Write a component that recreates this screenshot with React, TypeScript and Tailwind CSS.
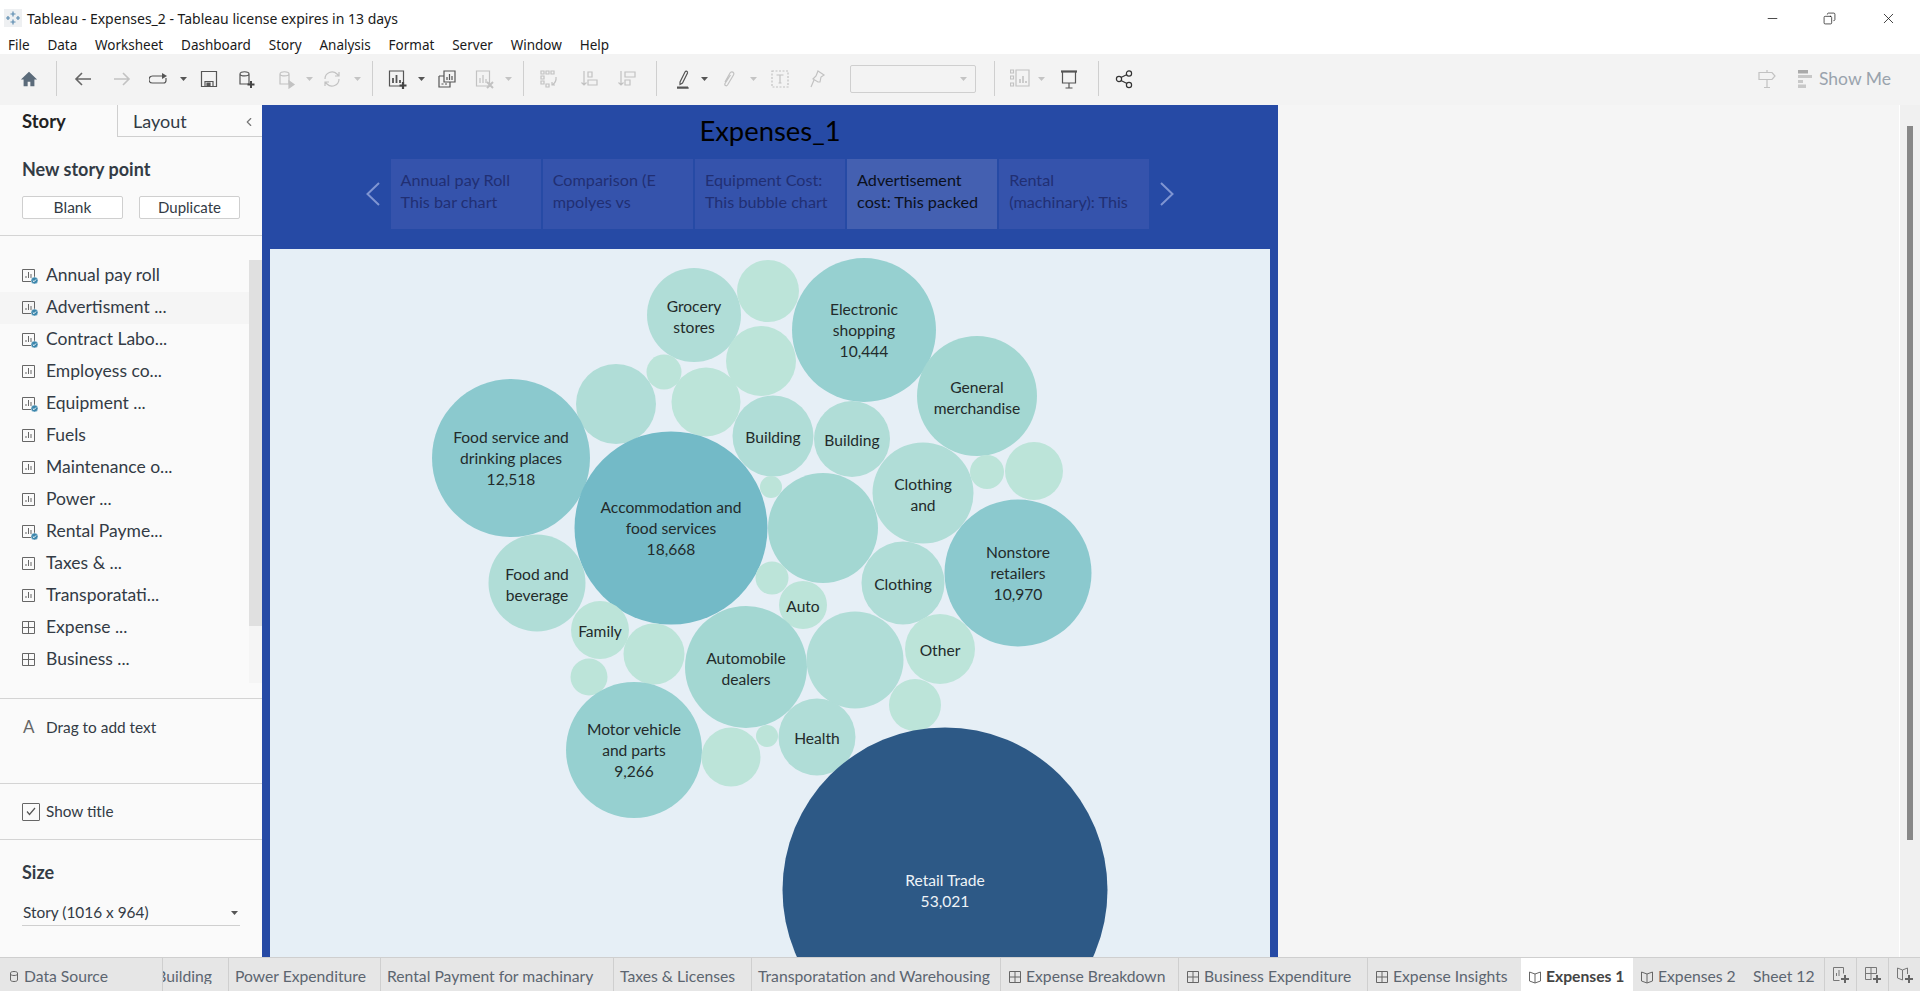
import React from 'react';
import { ChevronLeft, Copy, Minus, X } from 'lucide-react';

const UI_FONT = 'font-["Noto_Sans",sans-serif]';
const BOOK_FONT = 'font-["Lato",sans-serif]';

const menus = ['File', 'Data', 'Worksheet', 'Dashboard', 'Story', 'Analysis', 'Format', 'Server', 'Window', 'Help'];

type Bubble = { x: number; y: number; r: number; fill: string; lines?: string[]; value?: string; light?: boolean };

// x/y relative to the story canvas
const bubbles: Bubble[] = [
  { x: 424, y: 66, r: 47, fill: '#b0ddd7', lines: ['Grocery', 'stores'] },
  { x: 498, y: 42, r: 31, fill: '#bce4d9' },
  { x: 594, y: 81, r: 72, fill: '#96d0d0', lines: ['Electronic', 'shopping'], value: '10,444' },
  { x: 491, y: 112, r: 35, fill: '#bce4d9' },
  { x: 394, y: 123, r: 17.5, fill: '#bce4d9' },
  { x: 346, y: 155, r: 40, fill: '#b0ddd7' },
  { x: 436, y: 153, r: 34.5, fill: '#bce4d9' },
  { x: 707, y: 147, r: 60, fill: '#a3d7d2', lines: ['General', 'merchandise'] },
  { x: 503, y: 187, r: 40.5, fill: '#b0ddd7', lines: ['Building'] },
  { x: 582, y: 190, r: 38, fill: '#b0ddd7', lines: ['Building'] },
  { x: 241, y: 209, r: 79, fill: '#8bc9ce', lines: ['Food service and', 'drinking places'], value: '12,518' },
  { x: 401, y: 279, r: 96.5, fill: '#73bac7', lines: ['Accommodation and', 'food services'], value: '18,668' },
  { x: 501, y: 238, r: 11, fill: '#bce4d9' },
  { x: 653, y: 244, r: 50.5, fill: '#b0ddd7', lines: ['Clothing', 'and'] },
  { x: 717, y: 223, r: 17, fill: '#bce4d9' },
  { x: 764, y: 222, r: 29, fill: '#bce4d9' },
  { x: 553, y: 279, r: 55, fill: '#a3d7d2' },
  { x: 748, y: 324, r: 73.5, fill: '#8bc9ce', lines: ['Nonstore', 'retailers'], value: '10,970' },
  { x: 633, y: 334, r: 41.5, fill: '#b0ddd7', lines: ['Clothing'] },
  { x: 502, y: 329, r: 16.5, fill: '#bce4d9' },
  { x: 533, y: 356, r: 24, fill: '#bce4d9', lines: ['Auto'] },
  { x: 267, y: 334, r: 48.5, fill: '#b0ddd7', lines: ['Food and', 'beverage'] },
  { x: 330, y: 381, r: 29, fill: '#bce4d9', lines: ['Family'] },
  { x: 384, y: 405, r: 30.5, fill: '#bce4d9' },
  { x: 319, y: 428, r: 18.5, fill: '#bce4d9' },
  { x: 476, y: 418, r: 61, fill: '#a3d7d2', lines: ['Automobile', 'dealers'] },
  { x: 585, y: 411, r: 48.5, fill: '#b0ddd7' },
  { x: 670, y: 400, r: 35, fill: '#bce4d9', lines: ['Other'] },
  { x: 645, y: 456, r: 26, fill: '#bce4d9' },
  { x: 364, y: 501, r: 68, fill: '#96d0d0', lines: ['Motor vehicle', 'and parts'], value: '9,266' },
  { x: 461, y: 508, r: 29.5, fill: '#bce4d9' },
  { x: 497, y: 487, r: 11, fill: '#bce4d9' },
  { x: 547, y: 488, r: 38.5, fill: '#b0ddd7', lines: ['Health'] },
  { x: 675, y: 641, r: 162.5, fill: '#2d5986', lines: ['Retail Trade'], value: '53,021', light: true },
];

const storyPoints = [
  ['Annual pay Roll', 'This bar chart'],
  ['Comparison (E', 'mpolyes vs'],
  ['Equipment Cost:', 'This bubble chart'],
  ['Advertisement', 'cost: This packed'],
  ['Rental', '(machinary): This'],
];

const sheets: { name: string; done?: boolean; kind?: 'chart' | 'table'; active?: boolean }[] = [
  { name: 'Annual pay roll', done: true },
  { name: 'Advertisment ...', done: true, active: true },
  { name: 'Contract Labo...', done: true },
  { name: 'Employess co...' },
  { name: 'Equipment ...', done: true },
  { name: 'Fuels' },
  { name: 'Maintenance o...' },
  { name: 'Power ...' },
  { name: 'Rental Payme...', done: true },
  { name: 'Taxes & ...' },
  { name: 'Transporatati...' },
  { name: 'Expense ...', kind: 'table' },
  { name: 'Business ...', kind: 'table' },
];

function Caret({ className = '', dim }: { className?: string; dim?: boolean }) {
  return (
    <svg width="7" height="4" viewBox="0 0 7 4" className={`shrink-0 ${className}`}>
      <path d="M0 0h7L3.5 4z" fill={dim ? '#c4c4c4' : '#555'} />
    </svg>
  );
}

function Sep({ className = '' }: { className?: string }) {
  return <div className={`h-[35px] w-px shrink-0 bg-[#cfcfcf] ${className}`} />;
}

function Glyph({ children, className = '', stroke = '#555' }: { children: React.ReactNode; className?: string; stroke?: string }) {
  return (
    <svg width="20" height="20" viewBox="0 0 20 20" fill="none" stroke={stroke} strokeWidth="1.2" className={`shrink-0 ${className}`}>
      {children}
    </svg>
  );
}

function Toolbar() {
  const dim = '#c2c2c2';
  return (
    <div className="flex h-[51px] items-center bg-[#f3f3f3] pb-[2px]">
      <svg width="18" height="18" viewBox="0 0 20 20" className="ml-[20px] shrink-0">
        <path d="M10 2 1 10.500h3V18h4.500v-5h3v5H16v-7.500h3z" fill="#5b6b7a" />
      </svg>
      <Sep className="ml-[18px]" />
      <Glyph className="ml-[16px]" stroke="#666"><path d="M18 10H3M9 4l-6 6 6 6" strokeWidth="1.6" /></Glyph>
      <Glyph className="ml-[19px]" stroke={dim}><path d="M2 10h15M11 4l6 6-6 6" strokeWidth="1.6" /></Glyph>
      <Glyph className="ml-[17px]"><path d="M14 7H3.5a2.5 2.5 0 0 0 0 7h11a2.500 2.500 0 0 0 2.500-2.500V9" /><path d="M13 4l5 3-5 3z" fill="#555" stroke="none" /></Glyph>
      <Caret className="ml-[10.5px]" />
      <Glyph className="ml-[12.5px]"><path d="M2.5 2.5h15v15h-15zM6 17.5v-5h8v5" /><path d="M8 14h3v3H8z" fill="#555" /></Glyph>
      <Glyph className="ml-[17px]"><path d="M4 5c0-3 9-3 9 0v10H4zM4 5c0 2.500 9 2.500 9 0" /><path d="M15 12v7M11.500 15.500h7" strokeWidth="2" stroke="#444" /></Glyph>
      <Glyph className="ml-[20px]" stroke={dim}><path d="M4 5c0-3 9-3 9 0v10H4zM4 5c0 2.500 9 2.500 9 0" /><path d="M13 12l5 3.500-5 3.500z" fill={dim} /></Glyph>
      <Caret className="ml-[9.5px]" dim />
      <Glyph className="ml-[9.5px]" stroke={dim}><path d="M3 10a7 7 0 0 1 12-5l2 2M17 10a7 7 0 0 1-12 5l-2-2M17 3v4h-4M3 17v-4h4" /></Glyph>
      <Caret className="ml-[11.5px]" dim />
      <Sep className="ml-[11.5px]" />
      <Glyph className="ml-[14px]"><path d="M2.5 2h14v15h-14z" /><path d="M6 14V9M9.5 14V6M13 14v-3" strokeWidth="1.8" /><path d="M16 13v7M12.5 16.500h7" strokeWidth="2.2" stroke="#444" /></Glyph>
      <Caret className="ml-[10.5px]" />
      <Glyph className="ml-[12px]"><path d="M7 2h11v11H7zM2 7h5M2 7v11h11v-5" /><path d="M10 11V8M12.5 11V5M15 11V7M4.5 15h2M8 15h2" /></Glyph>
      <Glyph className="ml-[17.5px]" stroke={dim}><path d="M2.5 2h13v15h-13zM6 14V9M9 14V6M12 14v-4" /><path d="M13 13l6 6M19 13l-6 6" strokeWidth="2" /></Glyph>
      <Caret className="ml-[11px]" dim />
      <Sep className="ml-[11px]" />
      <Glyph className="ml-[15px]" stroke={dim}><path d="M2 2h3v3H2zM7 2h3v3H7zM12 2h3v3h-3zM2 7h3v3H2zM2 12h3v3H2zM7 15h3v3H7zM17 8a8 8 0 0 1-4 8M13 13v3h3" /></Glyph>
      <Glyph className="ml-[21px]" stroke={dim}><path d="M4 2v14M1.5 13.500 4 16l2.500-2.500M8 3h4v5H8zM8 11h9v5H8z" /></Glyph>
      <Glyph className="ml-[16.5px]" stroke={dim}><path d="M4 2v14M1.5 13.500 4 16l2.500-2.500M8 3h10v5H8zM8 11h5v5H8z" /></Glyph>
      <Sep className="ml-[19.5px]" />
      <Glyph className="ml-[16px]"><path d="M7 13 12 3c1-1.500 3-.5 2.500 1L9.500 14l-2.500 1.500zM4 19h12" /><path d="M4 18.500h11" strokeWidth="2" /></Glyph>
      <Caret className="ml-[7.5px]" />
      <Glyph className="ml-[11.5px]" stroke={dim}><path d="M6 13 11 4c1.500-2.500 5-.5 3.500 2l-6 10c-1 1.500-3.500.5-2.500-1.500L11.500 6" /></Glyph>
      <Caret className="ml-[11px]" dim />
      <Glyph className="ml-[13px]" stroke={dim}><path d="M2 2h16v16H2z" strokeDasharray="2 1.5" /><path d="M6.500 6h7M10 6v8M8.500 14h3" /></Glyph>
      <Glyph className="ml-[17px]" stroke={dim}><path d="M11 2l6 4-3 2-1 5-2 0-5-3 3-3zM7 11l-3 7" /></Glyph>
      <div className="ml-[22.5px] flex h-[28px] w-[126px] shrink-0 items-center justify-end rounded-[2px] border border-[#cfcfcf] pr-[8px]">
        <Caret dim />
      </div>
      <Sep className="ml-[18px]" />
      <Glyph className="ml-[15px]" stroke={dim}><path d="M.5 1h3v3h-3zM.5 7h3v3h-3zM.5 14h3v3h-3zM6 1h13v16H6z" /><path d="M10 14v-4M13 14V7M16 14v-2" strokeWidth="1.6" /></Glyph>
      <Caret className="ml-[8px]" dim />
      <Glyph className="ml-[14px]"><path d="M2 2.500h16" strokeWidth="2.2" /><path d="M3.500 3v11h13V3M10 14v5M6.500 19h7" /></Glyph>
      <Sep className="ml-[19px]" />
      <Glyph className="ml-[15.5px]" stroke="#333"><circle cx="15" cy="4.500" r="2.600" /><circle cx="5" cy="10" r="2.600" /><circle cx="15" cy="16" r="2.600" /><path d="M7 8.500l6-3M7 11.500l6 3" /></Glyph>
      <Glyph className="ml-auto" stroke={dim}><path d="M10 1v2M2 3.500h13l3 3.500-3 3.500H2zM10 10.500v8M7 18.500h6" /></Glyph>
      <svg width="14" height="18" viewBox="0 0 14 18" className="ml-[21px] shrink-0">
        <path d="M0 0h10v3.500H0z" fill="#aaa" />
        <path d="M0 5h14v3H0zM0 10h5v3H0zM0 14.500h8V18H0z" fill="#c8c8c8" />
      </svg>
      <span className={`ml-[7px] mr-[29px] text-[17.5px] leading-none text-[#9aa3ad] ${BOOK_FONT}`}>Show Me</span>
    </div>
  );
}

function SheetIcon({ done, kind }: { done?: boolean; kind?: 'chart' | 'table' }) {
  return (
    <svg width="17" height="17" viewBox="0 0 17 17" fill="none" stroke="#666" className="shrink-0">
      {kind === 'table' ? (
        <path d="M.5 1.500h12v12H.5zM6.500 1.500v12M.5 7.500h12" />
      ) : (
        <>
          <path d="M.5 1.500h12v12H.5z" />
          <path d="M4 10V8M6.500 10V4M9 10V6" />
        </>
      )}
      {done && (
        <>
          <circle cx="12.5" cy="12.5" r="3.5" fill="#3b86ac" stroke="#fafafa" strokeWidth="0.5" />
          <path d="M10.800 12.500l1.200 1.200 2-2.200" stroke="#fff" strokeWidth="1" />
        </>
      )}
    </svg>
  );
}

function Sidebar() {
  return (
    <aside className={`flex w-[262px] shrink-0 flex-col bg-[#fafafa] text-[#333b45] ${BOOK_FONT}`}>
      <div className="flex h-[32px] shrink-0">
        <div className="w-[117px] pl-[22px] pt-[3px] text-[18.5px] font-bold text-[#222]">Story</div>
        <div className="flex flex-1 items-center justify-between border-b border-l border-[#cfcfcf] pl-[15px] pr-[6px] pt-[2px] text-[18px]">
          <span>Layout</span>
          <ChevronLeft size={14} stroke="#777" />
        </div>
      </div>
      <div className="h-[99px] shrink-0 border-b border-[#d4d4d4] px-[22px]">
        <div className="mt-[20px] text-[18px] font-bold leading-[24px]">New story point</div>
        <div className="mt-[15px] flex justify-between">
          <button className="h-[23px] w-[101px] rounded-[2px] border border-[#cfcfcf] bg-white text-[15.5px] leading-none">Blank</button>
          <button className="h-[23px] w-[101px] rounded-[2px] border border-[#cfcfcf] bg-white text-[15px] leading-none">Duplicate</button>
        </div>
      </div>
      <div className="flex h-[463px] shrink-0 border-b border-[#d4d4d4] pt-[24px]">
        <div className="min-w-0 flex-1">
          {sheets.map((s) => (
            <div key={s.name} className={`flex h-[32px] items-center gap-[7px] pl-[22px] text-[17.5px] ${s.active ? 'bg-[#f5f5f5]' : ''}`}>
              <SheetIcon done={s.done} kind={s.kind} />
              <span className="-translate-y-px whitespace-nowrap">{s.name}</span>
            </div>
          ))}
        </div>
        <div className="h-[423px] w-[13px] bg-[#f5f5f5]">
          <div className="h-[366px] bg-[#e0e0e0]" />
        </div>
      </div>
      <div className="flex h-[85px] shrink-0 items-start gap-[8px] border-b border-[#d4d4d4] pl-[23px] pt-[17px] text-[15.4px]">
        <span className="w-[15px] text-[17px] leading-[22px] text-[#666]">A</span>
        <span className="leading-[22px]">Drag to add text</span>
      </div>
      <div className="flex h-[56px] shrink-0 items-center gap-[6px] border-b border-[#d4d4d4] pl-[22px] text-[15.3px]">
        <span className="flex size-[18px] items-center justify-center rounded-[1px] border border-[#666]">
          <svg width="10" height="9" viewBox="0 0 10 9" fill="none" stroke="#555" strokeWidth="1.2"><path d="M1 4.500l2.500 3L9 1" /></svg>
        </span>
        <span>Show title</span>
      </div>
      <div className="px-[22px]">
        <div className="mt-[20px] text-[18px] font-bold leading-[24px]">Size</div>
        <div className="mt-[16px] flex h-[26px] items-center justify-between border-b border-[#cfcfcf] pl-px pr-[1px] text-[15.4px]">
          <span>Story (1016 x 964)</span>
          <Caret className="mr-[1px]" />
        </div>
      </div>
    </aside>
  );
}

function BubbleChart() {
  return (
    <svg width="1000" height="708" viewBox="0 0 1000 708" className="block" fontFamily="Lato, sans-serif" fontSize="15.6">
      {bubbles.map((b, i) => {
        const rows = [...(b.lines ?? []), ...(b.value ? [b.value] : [])];
        const top = b.y - ((rows.length - 1) * 21) / 2 + (b.value ? 6 : 7);
        return (
          <g key={i}>
            <circle cx={b.x} cy={b.y} r={b.r} fill={b.fill} />
            {rows.map((t, j) => (
              <text key={t} x={b.x} y={top + j * 21} textAnchor="middle" fill={b.light ? '#eef3f7' : '#232b2b'}>
                {t}
              </text>
            ))}
          </g>
        );
      })}
    </svg>
  );
}

function StoryArrow({ dir }: { dir: 'left' | 'right' }) {
  return (
    <svg width="16" height="24" viewBox="0 0 16 24" fill="none" stroke="#7f95d2" strokeWidth="2" className="shrink-0">
      <path d={dir === 'left' ? 'M14 1 2.500 12 14 23' : 'M2 1l11.500 11L2 23'} />
    </svg>
  );
}

function StoryPanel() {
  return (
    <main className={`w-[1016px] shrink-0 overflow-hidden bg-[#264aa5] ${BOOK_FONT}`}>
      <h1 className="h-[54px] pt-[10px] text-center text-[27.4px] leading-[32px] text-black">Expenses_1</h1>
      <div className="flex h-[70px] items-center justify-center gap-[9.5px]">
        <StoryArrow dir="left" />
        <div className="flex gap-[2px]">
          {storyPoints.map((p, i) => (
            <div
              key={p[0]}
              className={`h-[70px] w-[150.2px] overflow-hidden py-[10px] pl-[10px] text-[16.2px] leading-[22px] whitespace-nowrap ${i === 3 ? 'bg-[#4460b1] text-[#0b1020]' : 'bg-[#3553ac] text-[#212f73]'}`}
            >
              <div>{p[0]}</div>
              <div>{p[1]}</div>
            </div>
          ))}
        </div>
        <StoryArrow dir="right" />
      </div>
      <div className="mx-[8px] mt-[20px] h-[708px] overflow-hidden bg-[#e6eff6]">
        <BubbleChart />
      </div>
    </main>
  );
}

const tabs = [
  { name: 'Power Expenditure', w: 'w-[152px]' },
  { name: 'Rental Payment for machinary', w: 'w-[233px]' },
  { name: 'Taxes & Licenses', w: 'w-[138px]' },
  { name: 'Transporatation and Warehousing', w: 'w-[249px]' },
];

function TabIcon({ story }: { story?: boolean }) {
  return (
    <svg width="12" height="14" viewBox="0 0 12 14" fill="none" stroke="#666" className="shrink-0">
      {story ? <path d="M.5 2l5.500 2 5.500-2v9l-5.500 2-5.500-2zM6 4v9" /> : <path d="M.5 1.500h11v11H.5zM6 1.500v11M.5 7h11" />}
    </svg>
  );
}

function AddIcon({ children }: { children: React.ReactNode }) {
  return (
    <div className="flex h-full w-[32px] shrink-0 items-center justify-center border-l border-[#cfcfcf]">
      <svg width="18" height="18" viewBox="0 0 18 18" fill="none" stroke="#777">
        {children}
        <path d="M13 9v8M9 13h8" stroke="#666" strokeWidth="2" />
      </svg>
    </div>
  );
}

function TabBar() {
  return (
    <footer className={`flex h-[34px] shrink-0 items-stretch overflow-hidden border-t border-[#cfcfcf] bg-[#e6e6e6] text-[15.7px] leading-none text-[#5c6570] ${BOOK_FONT}`}>
      <div className="flex w-[162px] shrink-0 items-center gap-[6px] pl-[10px] pt-[4px]">
        <svg width="8" height="11" viewBox="0 0 8 11" fill="none" stroke="#666"><path d="M.5 2c0-2 7-2 7 0v7c0 2-7 2-7 0zM.5 3c0 2 7 2 7 0" /></svg>
        Data Source
      </div>
      <div className="flex w-[66px] shrink-0 items-center border-l border-[#cfcfcf] pt-[4px]">
        <span className="flex w-[49px] justify-end overflow-hidden whitespace-nowrap">
          <span className="shrink-0">Building</span>
        </span>
      </div>
      {tabs.map((t) => (
        <div key={t.name} className={`flex ${t.w} shrink-0 items-center whitespace-nowrap border-l border-[#cfcfcf] pl-[6px] pt-[4px]`}>
          {t.name}
        </div>
      ))}
      <div className="flex w-[178px] shrink-0 items-center gap-[5px] whitespace-nowrap border-l border-[#cfcfcf] pl-[8px] pt-[4px]"><TabIcon />Expense Breakdown</div>
      <div className="flex w-[189px] shrink-0 items-center gap-[5px] whitespace-nowrap border-l border-[#cfcfcf] pl-[8px] pt-[4px]"><TabIcon />Business Expenditure</div>
      <div className="flex w-[154px] shrink-0 items-center gap-[5px] whitespace-nowrap border-l border-[#cfcfcf] pl-[8px] pt-[4px]"><TabIcon />Expense Insights</div>
      <div className="flex w-[112px] shrink-0 items-center gap-[5px] whitespace-nowrap bg-white pl-[8px] pt-[4px] font-bold text-[#444]"><TabIcon story />Expenses 1</div>
      <div className="flex w-[114px] shrink-0 items-center gap-[5px] whitespace-nowrap pl-[8px] pt-[4px]"><TabIcon story />Expenses 2</div>
      <div className="flex w-[77px] shrink-0 items-center whitespace-nowrap pl-[6px] pt-[4px]">Sheet 12</div>
      <AddIcon><path d="M1.500 1.500h10v6M1.500 1.500v13h6M4.500 10V7M7 10V4" /></AddIcon>
      <AddIcon><path d="M1.500 1.500h11v6M1.500 1.500v12h6M7 1.500v12M1.500 7.500h11" /></AddIcon>
      <AddIcon><path d="M1.500 2l5 2 5-2v6M1.500 2v10l5 2M6.500 4v10" /></AddIcon>
    </footer>
  );
}

export default function App() {
  return (
    <div className={`flex h-[991px] w-[1920px] flex-col overflow-hidden bg-white ${UI_FONT}`}>
      <header className="flex h-[36px] shrink-0 items-center pl-[4px] text-[14px] text-[#1a1a1a]">
        <svg width="18" height="18" viewBox="0 0 18 18" stroke="#5a8bb0" strokeWidth="1.2" className="mr-[5px]">
          <rect width="18" height="18" fill="#eef0f2" stroke="none" />
          <path d="M9 2.500v5M6.500 5h5M9 10.500v5M6.500 13h5M4 7v4M2 9h4M14 7v4M12 9h4" />
        </svg>
        Tableau - Expenses_2 - Tableau license expires in 13 days
        <div className="ml-auto flex items-center">
          <Minus size={15} strokeWidth={1.2} stroke="#111" className="mr-[43px]" />
          <Copy size={13} strokeWidth={1.3} stroke="#111" className="mr-[44px] -scale-x-100" />
          <X size={17} strokeWidth={1.1} stroke="#111" className="mr-[23px]" />
        </div>
      </header>
      <nav className="flex h-[18px] shrink-0 items-center gap-[17.8px] pl-[8px] text-[13.5px] text-[#1a1a1a]">
        {menus.map((m) => (
          <span key={m}>{m}</span>
        ))}
      </nav>
      <Toolbar />
      <div className="flex min-h-0 flex-1">
        <Sidebar />
        <StoryPanel />
        <div className="flex-1 border-r border-white bg-[#f5f5f5]" />
        <div className="w-[20px] shrink-0 bg-[#f0f0f0] pl-[7px] pt-[21px]">
          <div className="h-[714px] w-[6px] bg-[#888]" />
        </div>
      </div>
      <TabBar />
    </div>
  );
}
